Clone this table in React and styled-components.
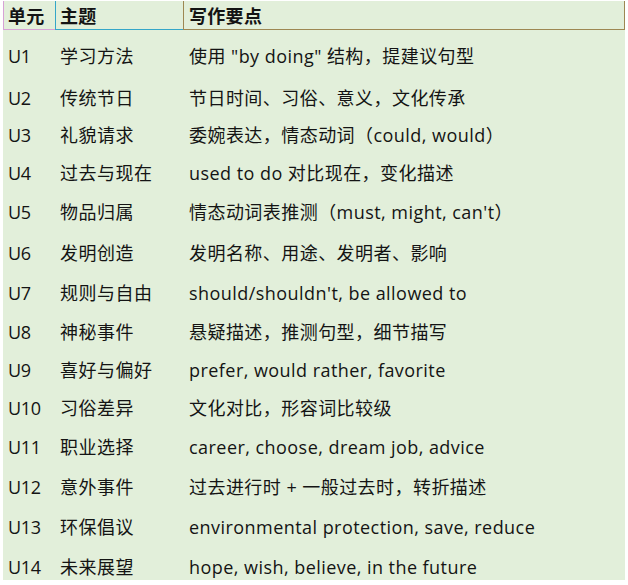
import React from "react"
import styled, { createGlobalStyle } from "styled-components"

const GlobalStyle = createGlobalStyle`
  html, body {
    margin: 0;
    padding: 0;
    background: #ffffff;
  }
  body {
    font-family: "Open Sans", "Noto Sans CJK SC", sans-serif;
  }
`

const Table = styled.div`
  margin: 1px 0 0 3px;
  width: 622px;
  background: #e2efda;
  color: #141414;
  font-size: 18px;
`

const Grid = styled.div`
  display: grid;
  grid-template-columns: 52px 128px 442px;
`

const HeadRow = styled(Grid)`
  height: 29px;
`

const HeadCell = styled.div`
  box-sizing: border-box;
  height: 29px;
  line-height: 28px;
  padding-left: ${props => props.pad}px;
  border-left: 1px solid ${props => props.line};
  border-bottom: 1px solid ${props => props.line};
  border-right: ${props => (props.last ? `1px solid ${props.line}` : "none")};
  font-family: "Noto Sans CJK SC", sans-serif;
  font-weight: 700;
  font-size: 18px;
  letter-spacing: 0.3px;
`

const Body = styled.div`
  padding-top: 6px;
`

const Row = styled(Grid)`
  height: ${props => props.h}px;
`

const Cell = styled.div`
  line-height: 40px;
  height: 40px;
  padding-left: ${props => props.pad}px;
  letter-spacing: ${props => props.spacing}px;
  white-space: nowrap;
`

const headers = [
  { text: "单元", line: "#d7a2d6", pad: 4 },
  { text: "主题", line: "#34a6c8", pad: 4 },
  { text: "写作要点", line: "#9d8752", pad: 5 },
]

const rows = [
  ["U1", "学习方法", "使用 \"by doing\" 结构，提建议句型", 42],
  ["U2", "传统节日", "节日时间、习俗、意义，文化传承", 37],
  ["U3", "礼貌请求", "委婉表达，情态动词（could, would）", 38],
  ["U4", "过去与现在", "used to do 对比现在，变化描述", 39],
  ["U5", "物品归属", "情态动词表推测（must, might, can't）", 41],
  ["U6", "发明创造", "发明名称、用途、发明者、影响", 40],
  ["U7", "规则与自由", "should/shouldn't, be allowed to", 39],
  ["U8", "神秘事件", "悬疑描述，推测句型，细节描写", 38],
  ["U9", "喜好与偏好", "prefer, would rather, favorite", 38],
  ["U10", "习俗差异", "文化对比，形容词比较级", 39],
  ["U11", "职业选择", "career, choose, dream job, advice", 40],
  ["U12", "意外事件", "过去进行时 + 一般过去时，转折描述", 40],
  ["U13", "环保倡议", "environmental protection, save, reduce", 40],
  ["U14", "未来展望", "hope, wish, believe, in the future", 33],
]

export default function App() {
  return (
    <>
      <GlobalStyle />
      <Table>
        <HeadRow>
          {headers.map((h, i) => (
            <HeadCell key={h.text} line={h.line} pad={h.pad} last={i === headers.length - 1}>
              {h.text}
            </HeadCell>
          ))}
        </HeadRow>
        <Body>
          {rows.map(([unit, topic, points, h]) => (
            <Row key={unit} h={h}>
              <Cell pad={5} spacing={-0.3}>{unit}</Cell>
              <Cell pad={5} spacing={0.5}>{topic}</Cell>
              <Cell pad={6} spacing={0.45}>{points}</Cell>
            </Row>
          ))}
        </Body>
      </Table>
    </>
  )
}
